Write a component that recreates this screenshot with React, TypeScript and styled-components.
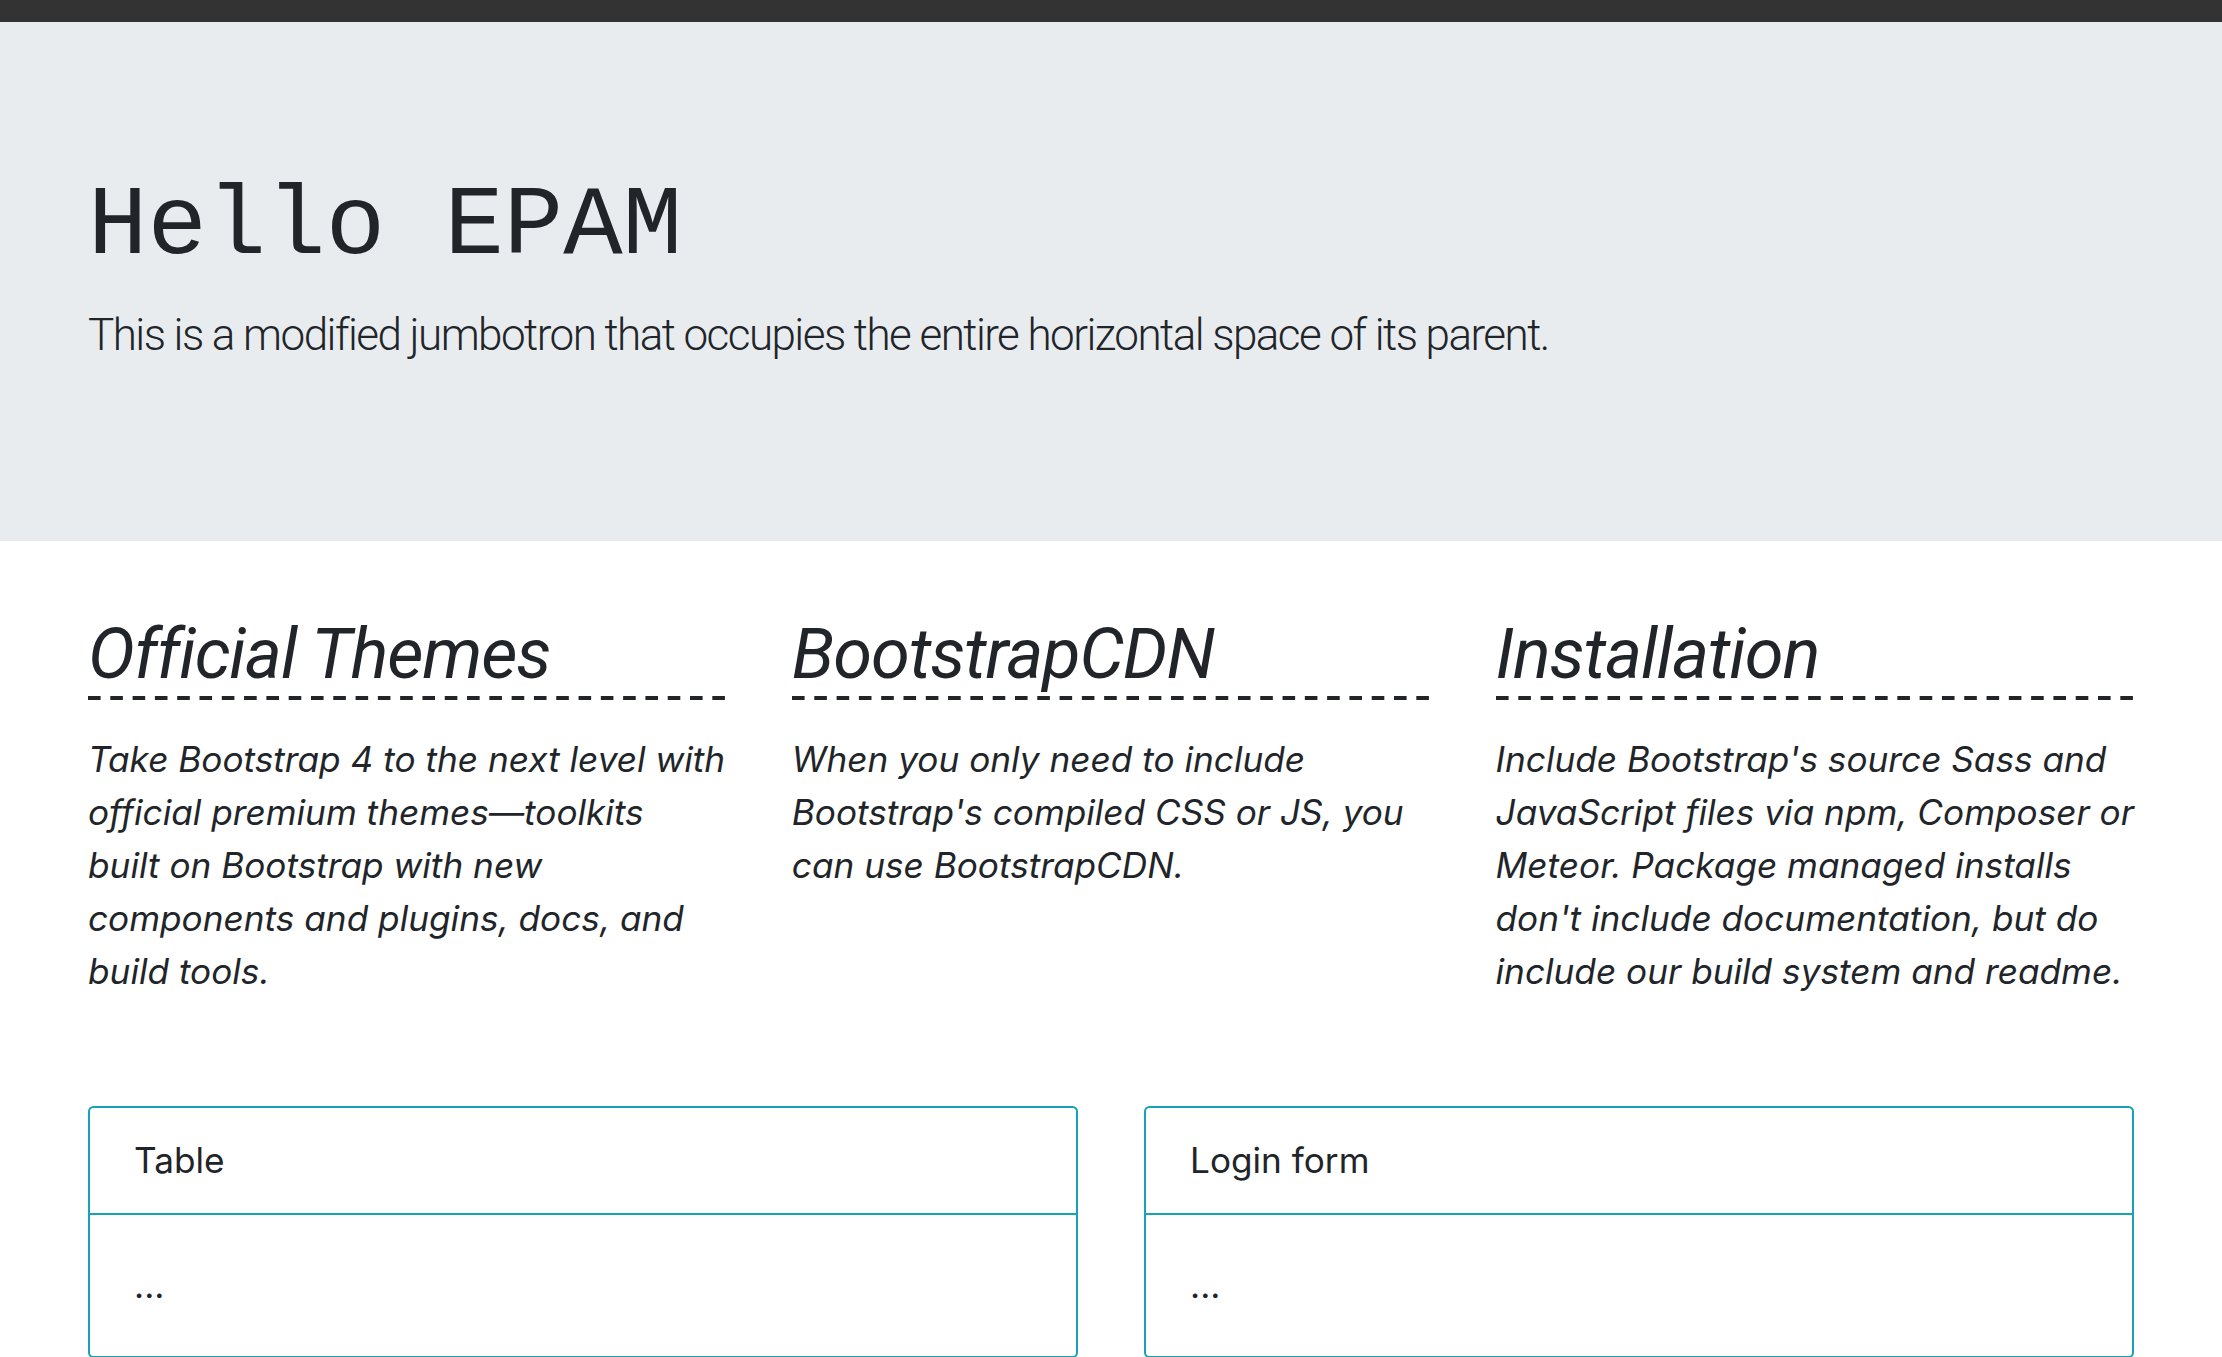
import styled, { createGlobalStyle } from "styled-components";

const GlobalStyle = createGlobalStyle`
  body {
    margin: 0;
    font-family: Inter, "Noto Sans", "Liberation Sans", sans-serif;
    font-size: 35.2px;
    line-height: 1.5;
    color: #212529;
    background: #fff;
  }
`;

const TopBar = styled.div`
  height: 22px;
  background: #333333;
`;

const Jumbotron = styled.header`
  background: #e9ecef;
  padding: 140.8px 0;
  margin-bottom: 70.4px;
`;

const Container = styled.div`
  max-width: 2112px;
  margin: 0 auto;
  padding: 0 33px;
  box-sizing: border-box;
`;

const Display = styled.h1`
  margin: 0 0 15px;
  padding-top: 5.6px;
  font-family: "Courier New", "Liberation Mono", monospace;
  font-size: 99px;
  font-weight: 400;
  line-height: 1.2;
`;

const Lead = styled.p`
  margin: 0 0 32.2px;
  font-family: Roboto, Inter, sans-serif;
  font-size: 44px;
  font-weight: 300;
  line-height: 1.5;
  letter-spacing: -1.55px;
`;

const Columns = styled.div`
  display: grid;
  grid-template-columns: repeat(3, 1fr);
  column-gap: 66px;
`;

const ColumnTitle = styled.h2`
  margin: 0 0 33px;
  padding-bottom: 4.4px;
  font-family: Roboto, Inter, sans-serif;
  font-size: 70.4px;
  font-style: italic;
  font-weight: 400;
  line-height: 84.5px;
  letter-spacing: -1.1px;
  /* dashed rule: 13px dash, ~9px gap, ending flush with the column */
  background: linear-gradient(to right, #212529 13px, transparent 13px)
    left bottom / 22.3px 4.4px repeat-x;
`;

const ColumnText = styled.p`
  margin: 0 0 35.2px;
  font-style: italic;
  white-space: nowrap;
`;

const Cards = styled.div`
  display: grid;
  grid-template-columns: repeat(2, 1fr);
  column-gap: 66px;
  margin-top: 73px;
`;

const Card = styled.section`
  border: 2.2px solid #17a2b8;
  border-radius: 5.5px;
  overflow: hidden;
`;

const CardHeader = styled.div`
  padding: 26.4px 44px;
  border-bottom: 2.2px solid #17a2b8;
`;

const CardBody = styled.div`
  padding: 44px;
`;

const columns = [
  {
    title: "Official Themes",
    lines: [
      "Take Bootstrap 4 to the next level with",
      "official premium themes—toolkits",
      "built on Bootstrap with new",
      "components and plugins, docs, and",
      "build tools.",
    ],
  },
  {
    title: "BootstrapCDN",
    lines: [
      "When you only need to include",
      "Bootstrap's compiled CSS or JS, you",
      "can use BootstrapCDN.",
    ],
  },
  {
    title: "Installation",
    lines: [
      "Include Bootstrap's source Sass and",
      "JavaScript files via npm, Composer or",
      "Meteor. Package managed installs",
      "don't include documentation, but do",
      "include our build system and readme.",
    ],
  },
];

export default function App() {
  return (
    <>
      <GlobalStyle />
      <TopBar />
      <Jumbotron>
        <Container>
          <Display>Hello EPAM</Display>
          <Lead>
            This is a modified jumbotron that occupies the entire horizontal
            space of its parent.
          </Lead>
        </Container>
      </Jumbotron>
      <Container>
        <Columns>
          {columns.map((col) => (
            <div key={col.title}>
              <ColumnTitle>{col.title}</ColumnTitle>
              <ColumnText>
                {col.lines.map((line, i) => (
                  <span key={i}>
                    {i > 0 && <br />}
                    {line}
                  </span>
                ))}
              </ColumnText>
            </div>
          ))}
        </Columns>
        <Cards>
          <Card>
            <CardHeader>Table</CardHeader>
            <CardBody>...</CardBody>
          </Card>
          <Card>
            <CardHeader>Login form</CardHeader>
            <CardBody>...</CardBody>
          </Card>
        </Cards>
      </Container>
    </>
  );
}
